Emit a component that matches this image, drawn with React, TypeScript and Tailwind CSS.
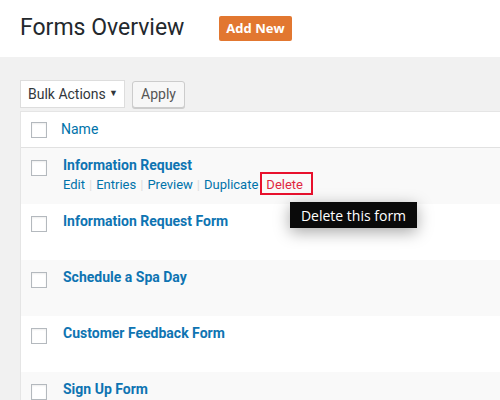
const forms = [
  "Information Request",
  "Information Request Form",
  "Schedule a Spa Day",
  "Customer Feedback Form",
  "Sign Up Form",
];

function Checkbox() {
  return <div className="w-4 h-4 shrink-0 border border-[#b4b9be] bg-white shadow-[inset_0_1px_2px_rgba(0,0,0,0.07)]" />;
}

function Sep() {
  return <span className="text-[#ddd] mx-[4px]">|</span>;
}

export default function App() {
  return (
    <div className="relative w-[500px] h-[400px] overflow-hidden bg-[#f1f1f1] font-['Roboto',sans-serif]">
      <div className="h-[57px] bg-white flex items-center px-5">
        <h1 className="text-[23px] leading-none text-[#23282d] mt-[-2px]">Forms Overview</h1>
        <button className="ml-[35px] h-[25px] px-[7px] rounded-[2px] bg-[#e27730] text-white font-['Open_Sans',sans-serif] font-bold text-[13px] leading-none">
          Add New
        </button>
      </div>

      <div className="pl-5 pt-[23px]">
        <div className="flex items-center gap-[7px]">
          <div className="w-[105px] h-[28px] bg-white border border-[#ddd] flex items-center justify-between pl-[7px] pr-[6px] text-[14px] text-[#32373c]">
            <span>Bulk Actions</span>
            <span className="text-[9px]">▼</span>
          </div>
          <button className="w-[53px] h-[27px] bg-[#f7f7f7] border border-[#ccc] rounded-[3px] shadow-[0_1px_0_#ccc] text-[14px] text-[#555]">
            Apply
          </button>
        </div>

        <div className="mt-[3px] -mr-4 bg-white border-l border-t border-[#e5e5e5]">
          <div className="h-[36px] flex items-center pl-[10px] border-b border-[#e1e1e1]">
            <Checkbox />
            <span className="ml-[14px] text-[14px] text-[#0073aa]">Name</span>
          </div>
          {forms.map((name, i) => (
            <div
              key={name}
              className={`h-[56px] flex items-start pl-[10px] ${i % 2 === 0 ? "bg-[#f9f9f9]" : "bg-white"}`}
            >
              <div className="mt-[12px]">
                <Checkbox />
              </div>
              <div className="ml-[16px] pt-[7px]">
                <div className="text-[14px] leading-[20px] font-bold text-[#0e74b2]">{name}</div>
                {i === 0 && (
                  <div className="text-[13px] leading-[20px] text-[#0073aa] flex items-center">
                    <span>Edit</span>
                    <Sep />
                    <span>Entries</span>
                    <Sep />
                    <span>Preview</span>
                    <Sep />
                    <span>Duplicate</span>
                    <span className="relative ml-[8px] text-[#e0263f]">
                      Delete
                      <span className="absolute -left-[6px] -right-[10px] -top-[3px] bottom-0 border-2 border-[#e8112d]" />
                    </span>
                  </div>
                )}
              </div>
            </div>
          ))}
        </div>
      </div>

      <div className="absolute left-[290px] top-[202px] w-[127px] h-[26px] bg-[#0a0a0a] text-white text-[14px] font-['Open_Sans',sans-serif] flex items-center justify-center shadow-[0_4px_16px_rgba(0,0,0,0.35)]">
        Delete this form
      </div>
    </div>
  );
}
